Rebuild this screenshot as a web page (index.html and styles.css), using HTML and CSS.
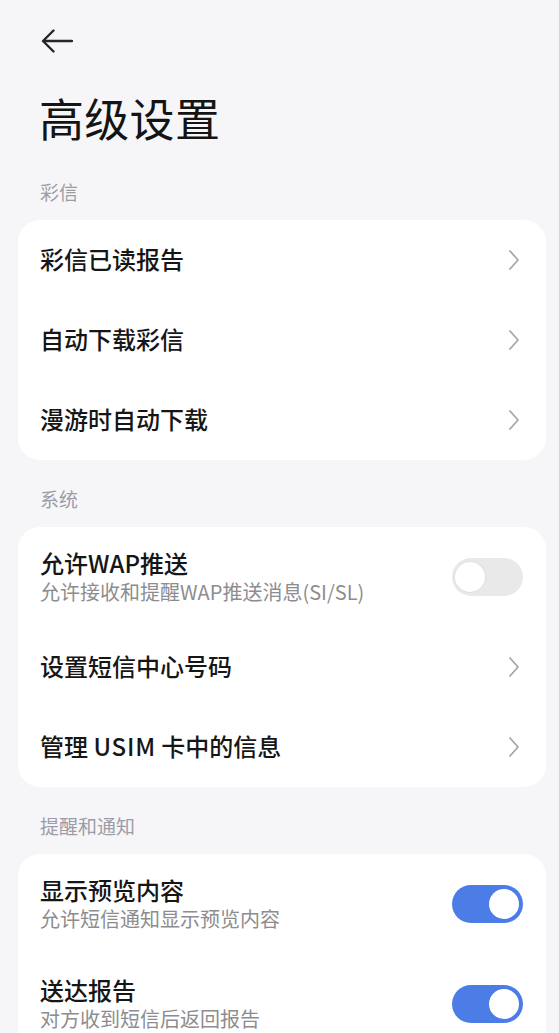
FILE: index.html
```html
<!DOCTYPE html>
<html lang="zh-CN">
<head>
<meta charset="utf-8">
<title>高级设置</title>
<link rel="stylesheet" href="styles.css">
</head>
<body>
<div class="page">
  <div class="topbar">
    <svg class="back" width="32" height="24" viewBox="0 0 32 24">
      <path d="M31 12H2.5M12.5 1.5L2 12l10.5 10.5" fill="none" stroke="#262626" stroke-width="2.4" stroke-linecap="round" stroke-linejoin="round"/>
    </svg>
  </div>
  <h1 class="title">高级设置</h1>

  <div class="section-label">彩信</div>
  <div class="card">
    <div class="row">
      <div class="row-text"><div class="row-title">彩信已读报告</div></div>
      <svg class="chev" width="12" height="22" viewBox="0 0 12 22"><path d="M2 2l8 9-8 9" fill="none" stroke="#a6a6a6" stroke-width="1.8" stroke-linecap="round" stroke-linejoin="round"/></svg>
    </div>
    <div class="row">
      <div class="row-text"><div class="row-title">自动下载彩信</div></div>
      <svg class="chev" width="12" height="22" viewBox="0 0 12 22"><path d="M2 2l8 9-8 9" fill="none" stroke="#a6a6a6" stroke-width="1.8" stroke-linecap="round" stroke-linejoin="round"/></svg>
    </div>
    <div class="row">
      <div class="row-text"><div class="row-title">漫游时自动下载</div></div>
      <svg class="chev" width="12" height="22" viewBox="0 0 12 22"><path d="M2 2l8 9-8 9" fill="none" stroke="#a6a6a6" stroke-width="1.8" stroke-linecap="round" stroke-linejoin="round"/></svg>
    </div>
  </div>

  <div class="section-label">系统</div>
  <div class="card">
    <div class="row tall">
      <div class="row-text">
        <div class="row-title">允许WAP推送</div>
        <div class="row-sub">允许接收和提醒WAP推送消息(SI/SL)</div>
      </div>
      <div class="switch off"><span class="knob"></span></div>
    </div>
    <div class="row">
      <div class="row-text"><div class="row-title">设置短信中心号码</div></div>
      <svg class="chev" width="12" height="22" viewBox="0 0 12 22"><path d="M2 2l8 9-8 9" fill="none" stroke="#a6a6a6" stroke-width="1.8" stroke-linecap="round" stroke-linejoin="round"/></svg>
    </div>
    <div class="row">
      <div class="row-text"><div class="row-title">管理 <span class="latin">USIM</span> 卡中的信息</div></div>
      <svg class="chev" width="12" height="22" viewBox="0 0 12 22"><path d="M2 2l8 9-8 9" fill="none" stroke="#a6a6a6" stroke-width="1.8" stroke-linecap="round" stroke-linejoin="round"/></svg>
    </div>
  </div>

  <div class="section-label">提醒和通知</div>
  <div class="card">
    <div class="row tall">
      <div class="row-text">
        <div class="row-title">显示预览内容</div>
        <div class="row-sub">允许短信通知显示预览内容</div>
      </div>
      <div class="switch on"><span class="knob"></span></div>
    </div>
    <div class="row tall">
      <div class="row-text">
        <div class="row-title">送达报告</div>
        <div class="row-sub">对方收到短信后返回报告</div>
      </div>
      <div class="switch on"><span class="knob"></span></div>
    </div>
  </div>
</div>
</body>
</html>
```

FILE: styles.css
```css
html, body {
  margin: 0;
  padding: 0;
  background: #f6f6f8;
}
body {
  font-family: "Noto Sans CJK SC", "Noto Sans", "Liberation Sans", sans-serif;
  color: #161616;
  overflow: hidden;
}
.page {
  width: 559px;
}
.topbar {
  height: 82px;
  display: flex;
  align-items: center;
  padding-left: 41px;
}
.back {
  display: block;
}
.title {
  margin: 8px 0 7px 0;
  padding-left: 39px;
  font-size: 45px;
  line-height: 56px;
  font-weight: 400;
  color: #141414;
  letter-spacing: 0.3px;
}
.section-label {
  padding: 27px 0 16px 40px;
  font-size: 19px;
  line-height: 24px;
  color: #9c9ca8;
}
.card {
  margin: 0 13px 0 18px;
  background: #ffffff;
  border-radius: 22px;
}
.row {
  height: 80px;
  display: flex;
  align-items: center;
  justify-content: space-between;
  padding: 0 23px 0 22px;
}
.row.tall {
  height: 100px;
}
.row-title {
  font-size: 24px;
  line-height: 30px;
  font-weight: 500;
  color: #161616;
  margin-top: -3px;
}
.row.tall .row-title {
  margin-top: -2px;
}
.latin {
  letter-spacing: 0.8px;
}
.row-sub {
  font-size: 20px;
  line-height: 26px;
  color: #8d8d8f;
  margin-top: 1px;
}
.chev {
  display: block;
  margin-right: 3px;
}
.switch {
  width: 71px;
  height: 38px;
  border-radius: 19px;
  position: relative;
  box-sizing: border-box;
}
.switch.on {
  background: #4c7ce6;
}
.switch.off {
  background: #e9e9ea;
}
.knob {
  position: absolute;
  top: 4px;
  width: 30px;
  height: 30px;
  border-radius: 50%;
  background: #ffffff;
}
.switch.on .knob {
  right: 4px;
}
.switch.off .knob {
  left: 3px;
  box-shadow: 0 0 0 1px #e0e0e0;
}
```
